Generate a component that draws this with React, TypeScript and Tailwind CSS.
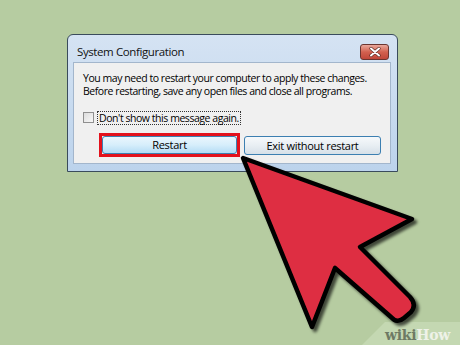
import React from 'react';

const CloseButton = () => (
  <div className="mt-[9px] mr-[2px] w-[29px] h-[16px] rounded-[3px] border border-[#6a3530] bg-gradient-to-b from-[#e8a89c] via-[#d2604f] to-[#c0473a] flex items-center justify-center">
    <svg width="12" height="10" viewBox="0 0 12 10">
      <path d="M2 1.5 L10 8.5 M10 1.5 L2 8.5" stroke="#5a2a24" strokeWidth="3.2" strokeLinecap="round" />
      <path d="M2 1.5 L10 8.5 M10 1.5 L2 8.5" stroke="#ffffff" strokeWidth="2" strokeLinecap="round" />
    </svg>
  </div>
);

const Arrow = () => (
  <svg className="absolute inset-0 pointer-events-none" width="460" height="345" viewBox="0 0 460 345">
    <defs>
      <filter id="sh" x="-20%" y="-20%" width="140%" height="140%">
        <feDropShadow dx="3" dy="3" stdDeviation="1.8" floodColor="#000" floodOpacity="0.65" />
      </filter>
    </defs>
    <polygon points="385,322 460,322 460,345 362,345" fill="#c4d8b2" />
    <path
      d="M243,158 L412,219 L360,247 L410,297 Q417,305 411,312 L404,318 Q397,324 391,317 L335,268 L312,327 Z"
      fill="#de2f42"
      stroke="#000"
      strokeWidth="4.5"
      strokeLinejoin="round"
      filter="url(#sh)"
    />
  </svg>
);

export default function App() {
  return (
    <div className="relative w-[460px] h-[345px] overflow-hidden bg-[#b6cca1] font-['Open_Sans',sans-serif] text-black">
      <div className="pl-[67px] pt-[34px]">
        <div className="w-[331px] h-[138px] flex flex-col rounded-t-[6px] border border-[#3a4b5c] bg-gradient-to-b from-[#d5e3f3] to-[#bcd3ec] pl-[5px] pr-[6px] pb-[7px]">
          <div className="h-[27px] flex items-start justify-between pl-[4px]">
            <span className="mt-[9px] text-[11.5px] leading-[15px] tracking-[-0.4px] text-[#111]">System Configuration</span>
            <CloseButton />
          </div>
          <div className="flex-1 bg-[#f0f0f0] border border-[#a3b6cc] pl-[9px] pt-[9px]">
            <p className="text-[10.5px] leading-[13px] tracking-[-0.45px] whitespace-nowrap">
              You may need to restart your computer to apply these changes.
              <br />
              Before restarting, save any open files and close all programs.
            </p>
            <div className="mt-[13px] flex items-center gap-[3px] h-[13px]">
              <div className="w-[11px] h-[11px] border border-[#8f8f8f] bg-gradient-to-br from-[#dcdcdc] to-[#f8f8f8]" />
              <span className="border border-dotted border-[#333] px-[1px] text-[10.5px] leading-[12px] tracking-[-0.45px] whitespace-nowrap">
                Don't show this message again.
              </span>
            </div>
            <div className="mt-[9px] ml-[16px] flex items-center gap-[4px]">
              <div className="border-[3px] border-[#e3111c]">
                <button className="block w-[135px] h-[18px] rounded-[3px] border border-[#3c7fb1] bg-gradient-to-b from-[#eaf6fd] via-[#d6eefb] to-[#b4dcf5] text-[11px] leading-[16px] tracking-[-0.3px]">
                  Restart
                </button>
              </div>
              <button className="w-[137px] h-[19px] rounded-[3px] border border-[#3c7fb1] bg-gradient-to-b from-[#f6f9fb] via-[#e8eef3] to-[#d6e0e8] text-[11px] leading-[17px] tracking-[-0.3px]">
                Exit without restart
              </button>
            </div>
          </div>
        </div>
      </div>
      <Arrow />
      <div className="absolute left-[385px] top-[327px] font-['DejaVu_Serif',serif] font-bold text-[14px] leading-[16px] tracking-[-0.3px]">
        <span className="text-[#6e7a64]">wiki</span>
        <span className="text-[#eef2e8]">How</span>
      </div>
    </div>
  );
}
